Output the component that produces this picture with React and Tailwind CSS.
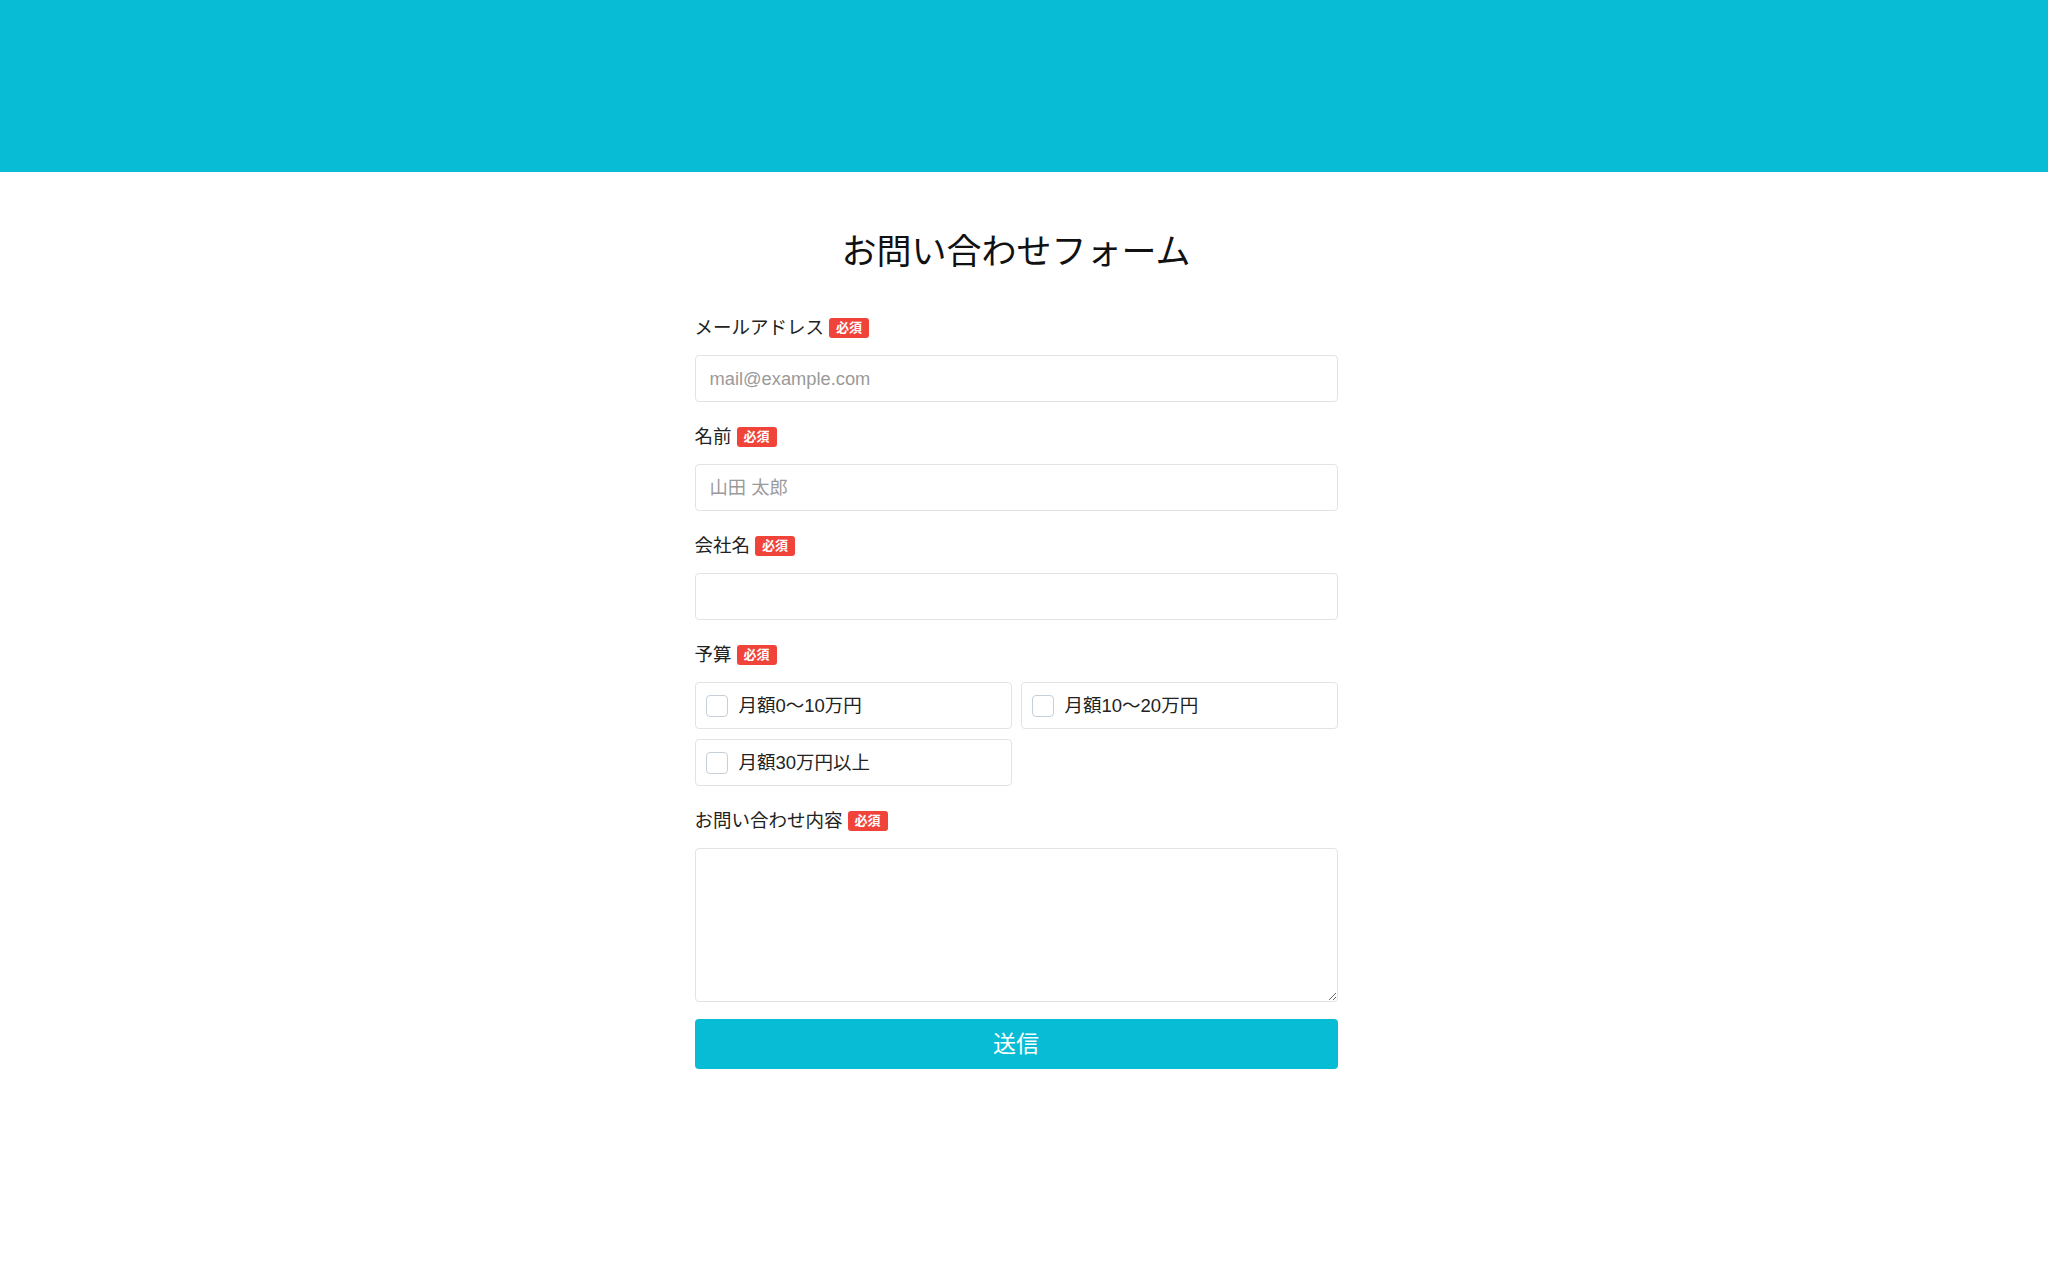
import { useState } from 'react';

const fontStack = "font-['Liberation_Sans','Noto_Sans_CJK_JP',sans-serif]";

function Required() {
    return (
        <span className="ml-[5px] inline-flex items-center justify-center w-[40px] h-[20px] rounded-[3px] bg-[#f0433a] text-white text-[13px] font-bold leading-none">
            必須
        </span>
    );
}

function FieldLabel({ children }) {
    return (
        <label className="flex items-center h-[27px] text-[18.5px] leading-[27px] text-[#222]">
            {children}
            <Required />
        </label>
    );
}

function BudgetOption({ label, checked, onChange }) {
    return (
        <label className="flex items-center h-[47px] px-[10px] gap-[11px] bg-white border border-[#e3e3e3] rounded-[4px] cursor-pointer">
            <input
                type="checkbox"
                checked={checked}
                onChange={onChange}
                className="appearance-none w-[22px] h-[22px] border border-[#c6d0da] rounded-[4px] bg-white checked:bg-[#08bcd5] checked:border-[#08bcd5]"
            />
            <span className="text-[18.5px] text-[#222]">{label}</span>
        </label>
    );
}

export default function App() {
    const [budget, setBudget] = useState([]);

    function toggleBudget(value) {
        setBudget(budget.includes(value) ? budget.filter((v) => v !== value) : [...budget, value]);
    }

    const options = ["月額0〜10万円", "月額10〜20万円", "月額30万円以上"];

    return (
        <div className={`min-h-screen bg-white ${fontStack}`}>
            <header className="h-[172px] bg-[#08bcd5]" />

            <main className="pr-[16px]">
                <form className="w-[643px] mx-auto flex flex-col" onSubmit={(e) => e.preventDefault()}>
                    <h1 className="mt-[54px] mb-[36px] text-center text-[35px] leading-[52px] text-[#111] font-normal">
                        お問い合わせフォーム
                    </h1>

                    <div className="flex flex-col gap-[21px]">
                        <div className="flex flex-col gap-[14px]">
                            <FieldLabel>メールアドレス</FieldLabel>
                            <input
                                type="email"
                                placeholder="mail@example.com"
                                className="h-[47px] px-[14px] text-[18.3px] border border-[#e3e3e3] rounded-[4px] outline-none placeholder:text-[#9a9a9a]"
                            />
                        </div>

                        <div className="flex flex-col gap-[14px]">
                            <FieldLabel>名前</FieldLabel>
                            <input
                                type="text"
                                placeholder="山田 太郎"
                                className="h-[47px] px-[14px] text-[18.3px] border border-[#e3e3e3] rounded-[4px] outline-none placeholder:text-[#9a9a9a]"
                            />
                        </div>

                        <div className="flex flex-col gap-[14px]">
                            <FieldLabel>会社名</FieldLabel>
                            <input
                                type="text"
                                className="h-[47px] px-[14px] text-[18.3px] border border-[#e3e3e3] rounded-[4px] outline-none"
                            />
                        </div>

                        <div className="flex flex-col gap-[14px]">
                            <FieldLabel>予算</FieldLabel>
                            <div className="grid grid-cols-2 gap-x-[9px] gap-y-[10px]">
                                {options.map((opt) => (
                                    <BudgetOption
                                        key={opt}
                                        label={opt}
                                        checked={budget.includes(opt)}
                                        onChange={() => toggleBudget(opt)}
                                    />
                                ))}
                            </div>
                        </div>

                        <div className="flex flex-col gap-[14px]">
                            <FieldLabel>お問い合わせ内容</FieldLabel>
                            <textarea className="h-[154px] px-[14px] py-2 text-[18.3px] border border-[#e3e3e3] rounded-[4px] outline-none" />
                        </div>
                    </div>

                    <button
                        type="submit"
                        className="mt-[17px] h-[50px] rounded-[4px] bg-[#08bcd5] text-white text-[23px] cursor-pointer"
                    >
                        送信
                    </button>
                </form>
            </main>
        </div>
    );
}
